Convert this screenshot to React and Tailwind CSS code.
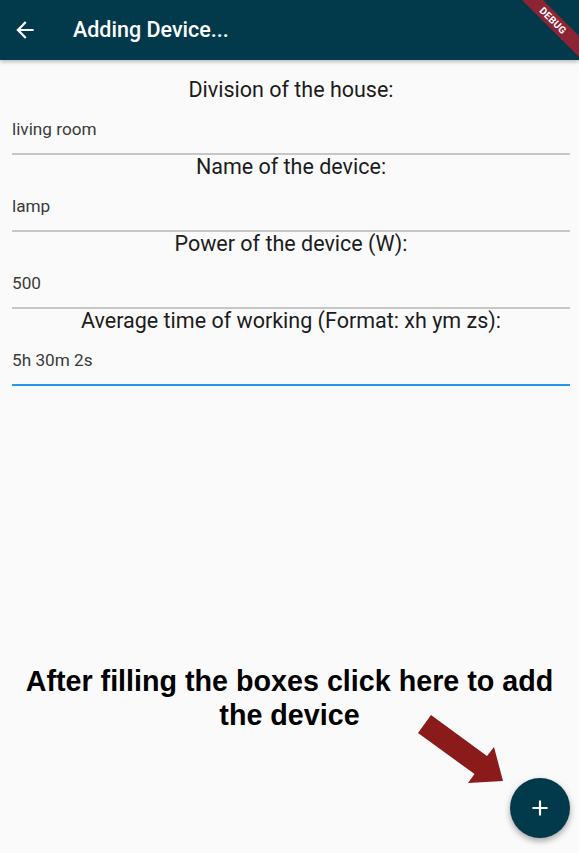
const fields = [
  { label: "Division of the house:", value: "living room" },
  { label: "Name of the device:", value: "lamp" },
  { label: "Power of the device (W):", value: "500" },
  { label: "Average time of working (Format: xh ym zs):", value: "5h 30m 2s", focused: true },
];

const App = () => {
  return (
    <div className="relative flex h-[853px] w-[579px] flex-col overflow-hidden bg-[#fafafa] font-['Roboto',sans-serif]">
      {/* App bar */}
      <div className="relative flex h-[60px] shrink-0 items-center bg-[#02394b] shadow-[0_2px_4px_rgba(0,0,0,0.25)]">
        <svg className="ml-[12px] h-[26px] w-[26px]" viewBox="0 0 24 24" fill="white">
          <path d="M20 11H7.83l5.59-5.59L12 4l-8 8 8 8 1.41-1.41L7.83 13H20v-2z" />
        </svg>
        <h1 className="ml-[35px] text-[21.5px] font-medium text-white">Adding Device...</h1>

        {/* Debug banner */}
        <div className="absolute right-0 top-0 h-[60px] w-[60px] overflow-hidden">
          <div className="absolute left-[-11px] top-[13px] flex h-[15px] w-[90px] rotate-45 items-center justify-center bg-[#8c2433]">
            <span className="text-[10px] font-bold leading-none tracking-[0.3px] text-white">DEBUG</span>
          </div>
        </div>
      </div>

      {/* Form */}
      <div className="pl-3 pr-[9px] pt-[18px]">
        {fields.map((f) => (
          <div key={f.label}>
            <div className="h-6 text-center text-[21.5px] leading-6 text-[#1c1c1c]">{f.label}</div>
            <div
              className={
                f.focused
                  ? "flex h-[53px] items-end border-b-2 border-[#2196f3] pb-[14px]"
                  : "flex h-[53px] items-end border-b-2 border-[#c6c6c6] pb-[14px]"
              }
            >
              <span className="text-[17.2px] leading-5 text-[#3a3a3a]">{f.value}</span>
            </div>
          </div>
        ))}
      </div>

      {/* Annotation */}
      <p className="mb-[121px] mt-auto text-center font-['Liberation_Sans',Arial,sans-serif] text-[28.7px] font-bold leading-[34px] text-black">
        After filling the boxes click here to add
        <br />
        the device
      </p>
      <svg className="absolute left-[410px] top-[705px]" width="100" height="90" viewBox="410 705 100 90">
        <polygon points="418,733 431,715 487,756 494,747 503,781 468,783 474.5,774" fill="#8b1a1a" />
      </svg>

      {/* FAB */}
      <button className="absolute bottom-[15px] right-[9px] flex h-[60px] w-[60px] items-center justify-center rounded-full bg-[#02394b] shadow-[0_3px_6px_rgba(0,0,0,0.35)]">
        <svg className="h-[26px] w-[26px]" viewBox="0 0 24 24" fill="white">
          <path d="M19 13h-6v6h-2v-6H5v-2h6V5h2v6h6v2z" />
        </svg>
      </button>
    </div>
  );
};

export default App;
